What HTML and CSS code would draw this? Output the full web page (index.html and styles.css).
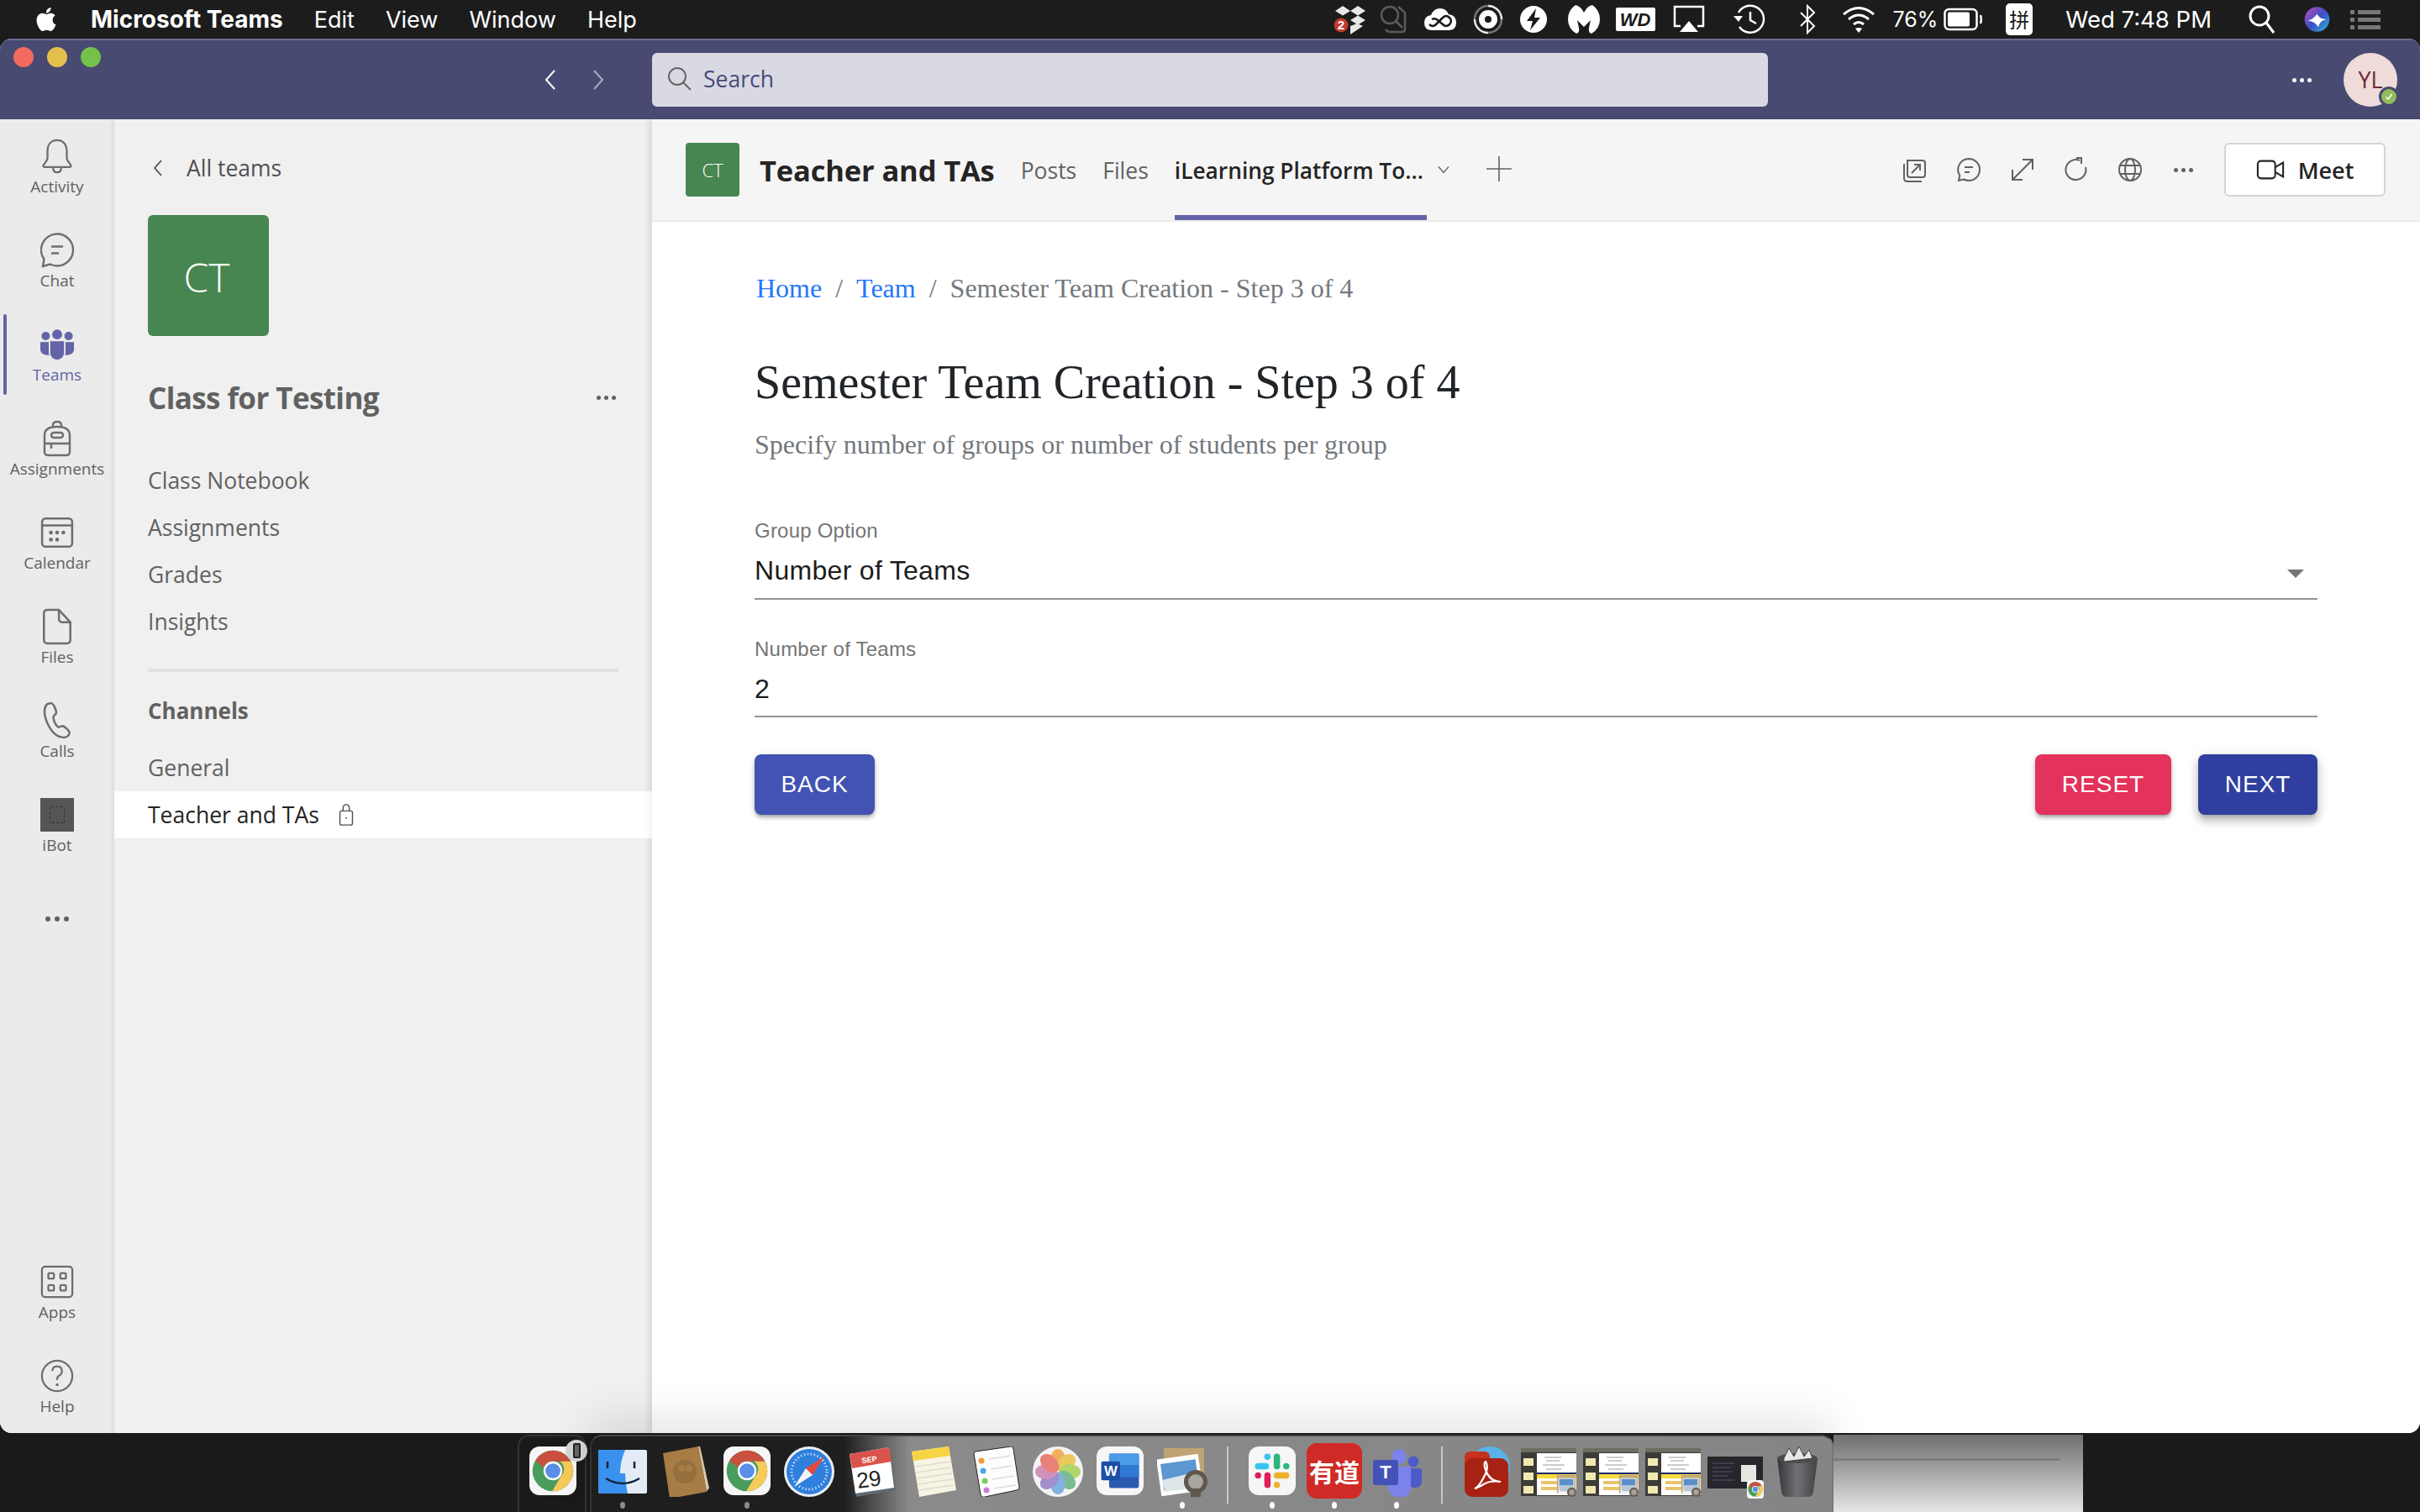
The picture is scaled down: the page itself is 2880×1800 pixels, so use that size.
FILE: index.html
```html
<!DOCTYPE html>
<html lang="en">
<head>
  <meta charset="UTF-8" />
  <title>Microsoft Teams</title>
  <link rel="stylesheet" href="styles.css">
</head>
<body>

  <svg class="defs" width="0" height="0">
    <symbol id="chrome" viewBox="0 0 60 60">
      <circle cx="30" cy="30" r="26" fill="#4a9c5d"/>
      <path d="M7.5 17A26 26 0 0 1 53 18H30a12 12 0 0 0-11.5 8z" fill="#c9503f"/>
      <path d="M53 18a26 26 0 0 1-24 38l12-20a12 12 0 0 0-2-18z" fill="#f6cb5a"/>
      <circle cx="30" cy="30" r="12" fill="#fff"/>
      <circle cx="30" cy="30" r="9.5" fill="#5a8ee8"/>
    </symbol>
    <symbol id="preview-mini" viewBox="0 0 60 60">
      <rect x="6" y="2" width="48" height="46" fill="#c4a978"/>
      <rect x="10" y="10" width="40" height="38" fill="#fff"/>
      <rect x="12" y="12" width="36" height="22" fill="#5c8fc9"/>
      <rect x="12" y="28" width="36" height="16" fill="#b8c8d8"/>
      <circle cx="44" cy="46" r="12" fill="#6a6257"/>
      <circle cx="44" cy="46" r="7" fill="#a6a39c"/>
    </symbol>
    <symbol id="doc-thumb" viewBox="0 0 66 57" preserveAspectRatio="none">
      <rect width="66" height="57" fill="#3b3b38"/>
      <rect x="0" y="0" width="66" height="5" fill="#6d6d62"/>
      <rect x="19" y="6" width="47" height="50" fill="#fff"/>
      <rect x="3" y="12" width="12" height="9" fill="#f0e9b0"/>
      <rect x="3" y="29" width="12" height="9" fill="#f0e9b0"/>
      <rect x="3" y="45" width="12" height="9" fill="#f0e9b0"/>
      <rect x="19" y="29" width="47" height="2" fill="#1d2a70"/>
      <rect x="19" y="31" width="47" height="5" fill="#f6dc3c"/>
      <rect x="24" y="39" width="38" height="4" fill="#eac46c"/>
      <rect x="24" y="46" width="30" height="4" fill="#eac46c"/>
      <path d="M28 11h20M30 15h16M26 20h26M30 25h18" stroke="#9a9a9a" stroke-width="1"/>
    </symbol>
  </svg>

  <div class="menubar">
    <div class="menu-left">
      <svg class="apple" viewBox="0 0 24 24"><path fill="#fff" d="M12.152 6.896c-.948 0-2.415-1.078-3.96-1.04-2.04.027-3.91 1.183-4.961 3.014-2.117 3.675-.546 9.103 1.519 12.09 1.013 1.454 2.208 3.09 3.792 3.039 1.52-.065 2.09-.987 3.935-.987 1.831 0 2.35.987 3.96.948 1.637-.026 2.676-1.48 3.676-2.948 1.156-1.688 1.636-3.325 1.662-3.415-.039-.013-3.182-1.221-3.22-4.857-.026-3.04 2.48-4.494 2.597-4.559-1.429-2.09-3.623-2.324-4.39-2.376-2-.156-3.675 1.09-4.61 1.09zM15.53 3.83c.843-1.012 1.4-2.427 1.245-3.83-1.207.052-2.662.805-3.532 1.818-.78.896-1.454 2.338-1.273 3.714 1.338.104 2.715-.688 3.559-1.701"/></svg>
      <b>Microsoft Teams</b>
      <span>Edit</span><span>View</span><span>Window</span><span>Help</span>
    </div>
    <div class="menu-right">
      <!-- dropbox -->
      <svg class="tray dropbox" viewBox="0 0 38 36"><path fill="#e8e8e8" d="M11 2l9 6-9 5.5L2 8zM29 2l9 6-9 5.5L20 8zM29 13.5l9 5.5-9 5.5-9-5.5zM20 26l8-3 7 3-15 10z"/><circle cx="9" cy="25" r="8.5" fill="#c0392b"/><text x="9" y="30" class="tray-num">2</text></svg>
      <svg class="tray" viewBox="0 0 38 36"><g fill="none" stroke="#5c5c5c" stroke-width="2.5"><circle cx="14" cy="13" r="10"/><path d="M21 20l8 8"/><path d="M24 3l8 7v20q0 3-3 3H14q-3 0-5-3"/></g></svg>
      <!-- creative cloud -->
      <svg class="tray cc" viewBox="0 0 38 36"><path fill="#fff" d="M0 22q0-8 8-9 3-8 11-8 7 0 10 7 9 1 9 10 0 9-9 9H9q-9 0-9-9z"/><path fill="none" stroke="#1b1b1b" stroke-width="2.5" d="M6 24q4 4 8 0l8-8q4-4 8 0t0 8q-4 4-8 0l-6-5q-3-3-7-1"/></svg>
      <svg class="tray" viewBox="0 0 38 36"><g fill="none" stroke-width="2.5"><path d="M19 2a16 16 0 0 1 16 16" stroke="#e8e8e8"/><path d="M35 18a16 16 0 0 1-16 16" stroke="#777"/><path d="M19 34A16 16 0 0 1 3 18" stroke="#e8e8e8"/><path d="M3 18A16 16 0 0 1 19 2" stroke="#777"/></g><circle cx="19" cy="18" r="11" fill="#fff"/><circle cx="19" cy="18" r="4" fill="#1b1b1b"/></svg>
      <svg class="tray" viewBox="0 0 38 36"><circle cx="19" cy="18" r="16" fill="#fff"/><path fill="#1b1b1b" d="M22 5L11 20h7l-3 11 12-15h-7z"/></svg>
      <svg class="tray" viewBox="0 0 38 36"><path fill="#fff" d="M9 1q6 1 10 9 4-8 10-9 9 6 9 17 0 11-10 17-4-1-3-7l2-9-8 8-8-8 2 9q1 6-3 7Q0 29 0 18 0 7 9 1z"/></svg>
      <svg class="tray wd" viewBox="0 0 48 36"><rect y="4" width="47" height="28" rx="2" fill="#fff"/><text x="23" y="26" class="tray-wd">WD</text></svg>
      <svg class="tray" viewBox="0 0 38 36"><path fill="none" stroke="#fff" stroke-width="2.5" d="M9 26H2V3h34v23h-7"/><path fill="#fff" d="M19 20l11 13H8z"/></svg>
      <svg class="tray" viewBox="0 0 38 36"><g fill="none" stroke="#fff" stroke-width="2.5"><path d="M6 10A16 16 0 1 1 7 27"/><path d="M20 9v10l7 4"/></g><path fill="#fff" d="M0 14h11l-5 7z"/></svg>
      <svg class="tray" viewBox="0 0 38 36"><path fill="none" stroke="#fff" stroke-width="2" d="M11 10l16 16-8 8V2l8 8-16 16"/></svg>
      <svg class="tray" viewBox="0 0 38 36"><g fill="none" stroke="#fff" stroke-width="3"><path d="M1 12q18-15 36 0"/><path d="M7 18q12-10 24 0"/><path d="M13 24q6-5 12 0"/></g><path fill="#fff" d="M19 34l-4-5q4-2 8 0z"/></svg>
      <span class="battery-num">76%</span>
      <svg class="battery" viewBox="0 0 46 28"><rect x="1.5" y="2" width="38" height="24" rx="5" fill="none" stroke="#fff" stroke-width="2.5"/><rect x="5" y="5.5" width="26" height="17" rx="2" fill="#fff"/><path d="M44 9q1.5 5 0 10" fill="none" stroke="#fff" stroke-width="2.5"/></svg>
      <span class="pinyin">拼</span>
      <span class="clock">Wed 7:48 PM</span>
      <svg class="tray find" viewBox="0 0 38 36"><g fill="none" stroke="#fff" stroke-width="3"><circle cx="16" cy="14" r="11"/><path d="M24 22l9 12"/></g></svg>
      <svg class="tray siri" viewBox="0 0 40 40"><defs><linearGradient id="siri" x1="0" y1="0" x2="1" y2="1"><stop offset="0" stop-color="#c54fb8"/><stop offset=".5" stop-color="#3c4fc8"/><stop offset="1" stop-color="#2fb6d8"/></linearGradient></defs><circle cx="20" cy="20" r="19" fill="url(#siri)"/><path d="M6 22q8-2 14-10 4 8 14 8-10 2-12 12-4-8-16-10z" fill="#fff"/></svg>
      <svg class="tray last" viewBox="0 0 38 36"><g fill="#777"><rect y="7" width="5" height="5"/><rect x="9" y="7" width="27" height="5"/><rect y="16" width="5" height="5"/><rect x="9" y="16" width="27" height="5"/><rect y="25" width="5" height="5"/><rect x="9" y="25" width="27" height="5"/></g></svg>
    </div>
  </div>

  <div class="window">
    <div class="titlebar">
      <div class="title-left">
        <div class="lights"><i class="red"></i><i class="yellow"></i><i class="green"></i></div>
        <div class="history">
          <svg viewBox="0 0 16 28"><path d="M13 3L3 14l10 11"/></svg>
          <svg class="off" viewBox="0 0 16 28"><path d="M3 3l10 11L3 25"/></svg>
        </div>
      </div>
      <div class="search">
        <svg viewBox="0 0 30 30"><circle cx="12" cy="12" r="10"/><path d="M19 19l9 9"/></svg>
        <span>Search</span>
      </div>
      <div class="title-right">
        <div class="dots light"><i></i><i></i><i></i></div>
        <div class="avatar">YL<span class="status"><svg viewBox="0 0 12 12"><path d="M2.5 6.5l2.5 2.5 4.5-6"/></svg></span></div>
      </div>
    </div>

    <div class="app">
      <nav class="rail">
        <div class="rail-item">
          <span class="rail-icon"><svg viewBox="0 0 40 46"><path d="M20 3c-8 0-12 6-12 14v8c0 3-3 6-5 9-.7 1.3 0 2.5 1.5 2.5h31c1.5 0 2.2-1.2 1.5-2.5-2-3-5-6-5-9v-8c0-8-4-14-12-14z"/><path d="M15 37c0 4 2 6 5 6s5-2 5-6"/></svg></span>
          <span class="rail-label">Activity</span>
        </div>
        <div class="rail-item">
          <span class="rail-icon"><svg viewBox="2 2 40 41"><path d="M22 3a19 19 0 0 1 0 38c-3 0-6-.7-8.5-2L5 41.5 6.5 33A19 19 0 0 1 22 3z"/><path d="M15 18h14M15 26h9"/></svg></span>
          <span class="rail-label">Chat</span>
        </div>
        <div class="rail-item active">
          <span class="rail-icon"><svg class="fill" viewBox="0 0 44 40"><circle cx="22" cy="7" r="6.5"/><circle cx="7" cy="9" r="5.5"/><circle cx="37" cy="9" r="5.5"/><path d="M13 16h18v15a9 9 0 0 1-18 0z"/><path d="M0 17h11v13c0 2 .3 3 1 4-7 0-12-2-12-8zM33 17h11v9c0 6-5 8-12 8 .7-1 1-2 1-4z"/></svg></span>
          <span class="rail-label">Teams</span>
        </div>
        <div class="rail-item">
          <span class="rail-icon"><svg viewBox="0 0 34 44"><path d="M12 8V6q0-4 5-4t5 4v2"/><path d="M2 18q0-10 15-10t15 10v20q0 4-4 4H6q-4 0-4-4z"/><rect x="10" y="15" width="14" height="6" rx="3"/><path d="M2 28h30M10 28v6"/></svg></span>
          <span class="rail-label">Assignments</span>
        </div>
        <div class="rail-item">
          <span class="rail-icon"><svg viewBox="0 0 38 36"><rect x="2" y="2" width="34" height="32" rx="4"/><path d="M2 10h34"/><g class="dotfill"><circle cx="12" cy="18" r="2.2"/><circle cx="19" cy="18" r="2.2"/><circle cx="26" cy="18" r="2.2"/><circle cx="12" cy="26" r="2.2"/><circle cx="19" cy="26" r="2.2"/></g></svg></span>
          <span class="rail-label">Calendar</span>
        </div>
        <div class="rail-item">
          <span class="rail-icon"><svg viewBox="0 0 34 42"><path d="M2 6q0-4 4-4h13l13 14v20q0 4-4 4H6q-4 0-4-4z"/><path d="M19 2v10q0 4 4 4h9"/></svg></span>
          <span class="rail-label">Files</span>
        </div>
        <div class="rail-item">
          <span class="rail-icon"><svg viewBox="0 0 34 42"><path d="M6 2C1 6 2 16 7 26s11 14 18 14c3 0 6-3 6-5 0-3-6-8-8-8-2 0-3 2-5 1-3-2-6-9-5-12 1-2 3-2 3-4 0-3-3-11-6-11-1 0-2 .5-4 1z"/></svg></span>
          <span class="rail-label">Calls</span>
        </div>
        <div class="rail-item">
          <span class="rail-icon"><span class="bot-tile"><span class="bot-inner"></span></span></span>
          <span class="rail-label">iBot</span>
        </div>
        <div class="rail-more"><div class="dots rail-dots"><i></i><i></i><i></i></div></div>
        <div class="rail-item push">
          <span class="rail-icon"><svg viewBox="0 0 42 42"><rect x="2" y="2" width="38" height="38" rx="4"/><rect x="10" y="10" width="7" height="7" rx="1.5"/><rect x="25" y="10" width="7" height="7" rx="1.5"/><rect x="10" y="25" width="7" height="7" rx="1.5"/><rect x="25" y="25" width="7" height="7" rx="1.5"/></svg></span>
          <span class="rail-label">Apps</span>
        </div>
        <div class="rail-item">
          <span class="rail-icon"><svg viewBox="0 0 42 42"><circle cx="21" cy="21" r="19"/><path d="M15 15q0-6 6-6t6 6q0 4-4 6-2 1-2 5"/><circle class="dotfill" cx="21" cy="32" r="1.8"/></svg></span>
          <span class="rail-label">Help</span>
        </div>
      </nav>

      <aside class="panel">
        <div class="back-row">
          <svg viewBox="0 0 14 22"><path d="M11 2L3 11l8 9"/></svg>
          <span>All teams</span>
        </div>
        <div class="team-tile">CT</div>
        <div class="team-name">
          <span>Class for Testing</span>
          <div class="dots"><i></i><i></i><i></i></div>
        </div>
        <ul class="links">
          <li>Class Notebook</li>
          <li>Assignments</li>
          <li>Grades</li>
          <li>Insights</li>
        </ul>
        <div class="divider"></div>
        <div class="channels-head">Channels</div>
        <ul class="links channels">
          <li>General</li>
          <li class="current">
            Teacher and TAs
            <svg viewBox="0 0 20 30"><rect x="2" y="10" width="16" height="18" rx="2"/><path d="M6 10V7q0-5 4-5t4 5v3"/><circle class="dotfill" cx="10" cy="19" r="1"/></svg>
          </li>
        </ul>
      </aside>

      <section class="content">
        <header class="tabs">
          <div class="tile-small">CT</div>
          <div class="channel-title">Teacher and TAs</div>
          <div class="tab">Posts</div>
          <div class="tab">Files</div>
          <div class="tab active">iLearning Platform To...</div>
          <svg class="tab-chevron" viewBox="0 0 14 10"><path d="M1 1.5l6 7 6-7"/></svg>
          <svg class="tab-plus" viewBox="0 0 30 30"><path d="M15 0v30M0 15h30"/></svg>
          <div class="actions">
            <svg viewBox="0 0 30 30"><path d="M6 4h18q3 0 3 3v14q0 3-3 3H9q-3 0-3-3z"/><path d="M2 8v17q0 4 4 4h17"/><path d="M11 19l10-10M14 9h7v7"/></svg>
            <svg viewBox="0 0 30 30"><path d="M15 2a13 13 0 0 1 0 26c-2 0-4-.5-6-1.5L3 28l1.3-6A13 13 0 0 1 15 2z"/><path d="M10 12h10M10 18h6"/></svg>
            <svg viewBox="0 0 30 30"><path d="M4 26L26 4M15 3h12v12M3 15v12h12"/></svg>
            <svg viewBox="0 0 30 30"><path d="M19 4a12 12 0 1 0 7 8"/><path d="M15 1h6v7"/></svg>
            <svg viewBox="0 0 30 30"><circle cx="15" cy="15" r="13"/><ellipse cx="15" cy="15" rx="6" ry="13"/><path d="M3 10h24M3 20h24"/></svg>
            <div class="dots"><i></i><i></i><i></i></div>
          </div>
          <button class="meet">
            <svg viewBox="0 0 36 26"><rect x="2" y="2" width="22" height="22" rx="4"/><path d="M24 10l10-6v18l-10-6"/></svg>
            Meet
          </button>
        </header>

        <main class="page">
          <div class="crumbs">
            <a>Home</a><span class="sep">/</span><a>Team</a><span class="sep">/</span><span>Semester Team Creation - Step 3 of 4</span>
          </div>
          <h1>Semester Team Creation - Step 3 of 4</h1>
          <p class="lead">Specify number of groups or number of students per group</p>

          <div class="field first">
            <label>Group Option</label>
            <div class="control">Number of Teams<i class="caret"></i></div>
          </div>
          <div class="field">
            <label>Number of Teams</label>
            <div class="control">2</div>
          </div>

          <div class="buttons">
            <button class="btn back">BACK</button>
            <button class="btn reset">RESET</button>
            <button class="btn next">NEXT</button>
          </div>
        </main>
      </section>
    </div>
  </div>

  <div class="desktop">
    <div class="dock-recent">
      <div class="dock-item"><span class="icon-box"><span class="squircle"><svg viewBox="0 0 60 60"><use href="#chrome"/></svg></span></span><span class="phone-badge"><i></i></span></div>
    </div>
    <div class="dock">
      <div class="dock-item gray-dot">
        <svg class="icon-box" viewBox="0 0 60 60"><rect x="1" y="4" width="58" height="52" rx="2" fill="#e3ecf6"/><path d="M1 6q0-2 2-2h30q-6 14-6 28h6q0 12 3 24H3q-2 0-2-2z" fill="#3a92ee"/><path d="M12 18v8M44 18v8" stroke="#17233a" stroke-width="2.5"/><path d="M10 38q20 12 40 0" fill="none" stroke="#17233a" stroke-width="2.5"/></svg>
        <i class="run"></i>
      </div>
      <div class="dock-item">
        <svg class="icon-box" viewBox="0 0 60 60"><path d="M4 8L46 0l10 54-44 8z" fill="#a77d45"/><path d="M46 0l2-.4 11 50-3 4z" fill="#d8c9a8"/><circle cx="30" cy="30" r="14" fill="#94703f"/><circle cx="26" cy="26" r="4" fill="#a77d45"/><circle cx="35" cy="26" r="4" fill="#a77d45"/></svg>
      </div>
      <div class="dock-item gray-dot">
        <span class="icon-box"><span class="squircle"><svg viewBox="0 0 60 60"><use href="#chrome"/></svg></span></span>
        <i class="run"></i>
      </div>
      <div class="dock-item">
        <svg class="icon-box" viewBox="0 0 60 60"><circle cx="30" cy="30" r="30" fill="#e9eef4"/><circle cx="30" cy="30" r="27" fill="#2f7fdd"/><circle cx="30" cy="30" r="21" fill="none" stroke="#bcd8f4" stroke-width="3" stroke-dasharray="1.5 2.5"/><path d="M48 12L26 26l8 8z" fill="#e8483c"/><path d="M12 48l14-22 8 8z" fill="#f3f3f3"/></svg>
      </div>
      <div class="dock-item">
        <svg class="icon-box" viewBox="0 0 60 60"><path d="M4 10L52 2l7 50-47 8z" fill="#5f6a72"/><path d="M4 9L51 1l6 48-46 7z" fill="#fff"/><path d="M4 9L51 1l3 17L7 26z" fill="#d9534c"/><text x="19" y="20" class="cal-month" transform="rotate(-8 19 20)">SEP</text><text x="14" y="50" class="cal-day" transform="rotate(-8 14 50)">29</text></svg>
      </div>
      <div class="dock-item">
        <svg class="icon-box" viewBox="0 0 60 60"><path d="M4 6L48 0l9 52-44 8z" fill="#f7f4e4"/><path d="M4 6L48 0l2 11-44 6z" fill="#f7d443"/><path d="M8 24l42-6M9 31l42-6M10 38l42-6M11 45l42-6M12 52l42-6" stroke="#dcdcd0" stroke-width="1.5"/></svg>
      </div>
      <div class="dock-item">
        <svg class="icon-box" viewBox="0 0 60 60"><path d="M6 6L48 0q3 0 3 3l7 46q0 3-3 3L17 60q-4 1-5-3L4 9q0-3 2-3z" fill="#fdfdfd" stroke="#222" stroke-width="1"/><circle cx="13" cy="17" r="3.5" fill="#f39c3d"/><circle cx="15" cy="29" r="3.5" fill="#4aa5ec"/><circle cx="17" cy="41" r="3.5" fill="#7ccf5b"/><circle cx="19" cy="52" r="3.5" fill="#c77ddb"/><path d="M22 15l26-4M24 27l26-4M26 39l26-4M28 50l26-4" stroke="#ddd" stroke-width="1.5"/></svg>
      </div>
      <div class="dock-item">
        <svg class="icon-box" viewBox="0 0 60 60"><circle cx="30" cy="30" r="30" fill="#f3f3f3"/><g opacity=".82"><ellipse cx="30" cy="16" rx="9" ry="13" fill="#f1a33c"/><ellipse cx="30" cy="16" rx="9" ry="13" fill="#e8c23f" transform="rotate(45 30 30)"/><ellipse cx="30" cy="16" rx="9" ry="13" fill="#a6cf50" transform="rotate(90 30 30)"/><ellipse cx="30" cy="16" rx="9" ry="13" fill="#62b07c" transform="rotate(135 30 30)"/><ellipse cx="30" cy="16" rx="9" ry="13" fill="#6ba3dd" transform="rotate(180 30 30)"/><ellipse cx="30" cy="16" rx="9" ry="13" fill="#8e7ac4" transform="rotate(225 30 30)"/><ellipse cx="30" cy="16" rx="9" ry="13" fill="#c97dae" transform="rotate(270 30 30)"/><ellipse cx="30" cy="16" rx="9" ry="13" fill="#e8695c" transform="rotate(315 30 30)"/></g></svg>
      </div>
      <div class="dock-item">
        <span class="icon-box"><span class="squircle"><svg viewBox="0 0 60 60"><rect x="16" y="8" width="38" height="44" rx="3" fill="#2b5bb0"/><rect x="16" y="8" width="38" height="15" fill="#4a9be8"/><rect x="16" y="23" width="38" height="15" fill="#2f79d4"/><rect x="6" y="18" width="24" height="24" rx="2" fill="#1b4fa8"/><text x="18" y="36" class="word-w">W</text></svg></span></span>
      </div>
      <div class="dock-item white-dot">
        <svg class="icon-box" viewBox="0 0 60 60"><rect x="8" y="2" width="48" height="38" fill="#bfa372"/><rect x="2" y="12" width="50" height="44" fill="#fff" transform="rotate(-8 27 34)"/><rect x="6" y="18" width="42" height="32" fill="#5c97d2" transform="rotate(-8 27 34)"/><path d="M6 40l42-10 4 18-42 6z" fill="#dfe6ea"/><circle cx="46" cy="42" r="14" fill="#5f574c"/><circle cx="46" cy="42" r="9" fill="#a9a69f"/><rect x="40" y="50" width="12" height="10" fill="#5f574c"/></svg>
        <i class="run"></i>
      </div>
      <i class="dock-sep"></i>
      <div class="dock-item white-dot">
        <span class="icon-box"><span class="squircle"><svg viewBox="0 0 60 60"><g stroke-width="8" stroke-linecap="round" fill="none"><path d="M22 24H12" stroke="#36c5f0"/><path d="M24 12v0" stroke="#36c5f0"/><path d="M36 24V12" stroke="#2eb67d"/><path d="M48 24h0" stroke="#2eb67d"/><path d="M36 36h12" stroke="#ecb22e"/><path d="M36 48v0" stroke="#ecb22e"/><path d="M24 36v12" stroke="#e01e5a"/><path d="M12 36h0" stroke="#e01e5a"/></g></svg></span></span>
        <i class="run"></i>
      </div>
      <div class="dock-item white-dot">
        <span class="icon-box youdao">有道</span>
        <i class="run"></i>
      </div>
      <div class="dock-item white-dot">
        <svg class="icon-box" viewBox="0 0 60 60"><circle cx="50" cy="18" r="6.5" fill="#4d5bc8"/><path d="M44 26h14q2 0 2 2v14q0 7-8 7-6 0-8-4z" fill="#4d5bc8"/><circle cx="33" cy="12" r="9" fill="#7b83eb"/><path d="M20 24h27v24a13 13 0 0 1-27 0z" fill="#7b83eb"/><rect x="2" y="16" width="30" height="30" rx="3" fill="#4452b8"/><text x="17" y="38" class="teams-t">T</text></svg>
        <i class="run"></i>
      </div>
      <i class="dock-sep"></i>
      <div class="dock-item">
        <svg class="icon-box" viewBox="0 0 60 60"><circle cx="34" cy="24" r="24" fill="#5ab3e6"/><rect x="4" y="6" width="30" height="30" rx="6" fill="#c7321f"/><rect x="4" y="14" width="52" height="46" rx="9" fill="#a82214"/><path d="M16 50q6-2 14-20 2-8-1-12-3 2 0 10 5 14 18 14-14-2-22 4-7 4-9 4z" fill="none" stroke="#fff" stroke-width="2.2"/></svg>
      </div>
      <div class="dock-item"><span class="stack"><svg viewBox="0 0 66 57" preserveAspectRatio="none"><use href="#doc-thumb"/></svg><svg class="stack-mini" viewBox="0 0 60 60"><use href="#preview-mini"/></svg></span></div>
      <div class="dock-item"><span class="stack"><svg viewBox="0 0 66 57" preserveAspectRatio="none"><use href="#doc-thumb"/></svg><svg class="stack-mini" viewBox="0 0 60 60"><use href="#preview-mini"/></svg></span></div>
      <div class="dock-item"><span class="stack"><svg viewBox="0 0 66 57" preserveAspectRatio="none"><use href="#doc-thumb"/></svg><svg class="stack-mini" viewBox="0 0 60 60"><use href="#preview-mini"/></svg></span></div>
      <div class="dock-item"><span class="stack dark"><svg viewBox="0 0 66 38" preserveAspectRatio="none"><rect width="66" height="38" fill="#26262c"/><rect x="40" y="10" width="18" height="20" fill="#e8e6e0"/><path d="M6 8h26M6 13h22M6 18h24M6 23h18M6 28h26" stroke="#55556a" stroke-width="1.2"/></svg><span class="squircle stack-chrome"><svg viewBox="0 0 60 60"><use href="#chrome"/></svg></span></span></div>
      <div class="dock-item">
        <svg class="icon-box" viewBox="0 0 60 60"><defs><linearGradient id="bin" x1="0" x2="1"><stop offset="0" stop-color="#343638"/><stop offset=".5" stop-color="#6f7174"/><stop offset="1" stop-color="#3f4143"/></linearGradient></defs><path d="M6 14h48l-5 40q-1 6-6 6H17q-5 0-6-6z" fill="url(#bin)"/><ellipse cx="30" cy="14" rx="24" ry="6" fill="#4a4c4e"/><path d="M14 14l6-12 6 10 6-12 6 12 6-8 4 10-34 4z" fill="#e6e6e6" stroke="#444"/></svg>
      </div>
    </div>
    <div class="wallpaper"></div>
  </div>

</body>
</html>
```

FILE: styles.css
```css
* {
  box-sizing: border-box;
}

html, body {
  margin: 0;
  width: 2880px;
  height: 1800px;
  overflow: hidden;
}

body {
  background: #1a1a1a;
  font-family: "Open Sans", sans-serif;
  display: flex;
  flex-direction: column;
}

.defs {
  display: block;
  height: 0;
}

ul {
  list-style: none;
  margin: 0;
  padding: 0;
}

/* menu bar */
.menubar {
  height: 46px;
  flex: none;
  background: #1c1c1c;
  color: #fff;
  display: flex;
  justify-content: space-between;
  align-items: center;
  font-family: Inter, sans-serif;
  font-size: 27px;
  white-space: nowrap;
}

.menu-left {
  display: flex;
  align-items: center;
  gap: 37px;
  padding-left: 41px;
}

.apple {
  width: 28px;
  height: 32px;
  margin-right: 2px;
}

.menu-left b {
  font-weight: 700;
  font-size: 28px;
}

.menu-right {
  display: flex;
  align-items: center;
  padding-right: 45px;
}

/* gaps between the tray icons are uneven, so each one gets its own */
.tray {
  width: 38px;
  height: 36px;
  flex: none;
}

.tray:nth-of-type(1) { margin-right: 15px; }
.tray:nth-of-type(2) { margin-right: 17px; }
.tray:nth-of-type(3) { margin-right: 19px; }
.tray:nth-of-type(4) { margin-right: 16px; }
.tray:nth-of-type(5) { margin-right: 22px; }
.tray:nth-of-type(6) { margin-right: 19px; }
.tray:nth-of-type(7) { margin-right: 20px; }
.tray:nth-of-type(8) { margin-right: 34px; }
.tray:nth-of-type(9) { margin-right: 31px; }
.tray:nth-of-type(10) { margin-right: 23px; }
.tray:nth-of-type(11) { margin-right: 21px; }

.tray.wd {
  width: 48px;
}

.tray-num {
  font: 700 15px "Liberation Sans", sans-serif;
  fill: #fff;
  text-anchor: middle;
}

.tray-wd {
  font: italic 700 22px "Liberation Sans", sans-serif;
  fill: #1b1b1b;
  text-anchor: middle;
}

.battery-num {
  font-size: 25px;
  margin-right: 7px;
}

.battery {
  width: 46px;
  height: 28px;
  margin-right: 28px;
}

.pinyin {
  width: 32px;
  height: 38px;
  background: #fff;
  color: #1b1b1b;
  border-radius: 5px;
  font: 24px/38px "Noto Sans CJK SC", sans-serif;
  text-align: center;
  margin-right: 39px;
}

.clock {
  margin-right: 41px;
  font-size: 27.5px;
}

.tray.find {
  margin-right: 31px;
}

.tray.siri {
  width: 31px;
  height: 38px;
  margin-right: 24px;
}

.tray.last {
  margin-right: 0;
}

/* window */
.window {
  height: 1660px;
  flex: none;
  display: flex;
  flex-direction: column;
  border-radius: 14px;
  overflow: hidden;
  background: #fff;
}

.titlebar {
  height: 96px;
  flex: none;
  background: #484a71;
  border-top: 2px solid #6d6e91;
  display: grid;
  grid-template-columns: 776px 1328px 1fr;
  align-items: center;
}

.title-left {
  display: flex;
  align-items: flex-start;
  justify-content: space-between;
  align-self: stretch;
  padding-left: 16px;
  padding-right: 56px;
}

.lights {
  display: flex;
  gap: 16px;
  padding-top: 8px;
}

.lights i {
  width: 24px;
  height: 24px;
  border-radius: 50%;
}

.lights .red { background: #f26b5e; }
.lights .yellow { background: #e3c04c; }
.lights .green { background: #74c24a; }

.history {
  display: flex;
  gap: 41px;
  padding-top: 33px;
}

.history svg {
  width: 16px;
  height: 28px;
  fill: none;
  stroke: #fff;
  stroke-width: 2;
}

.history .off {
  stroke: #a9aac2;
}

.search {
  height: 64px;
  background: #d9d9e3;
  border-radius: 6px;
  display: flex;
  align-items: center;
  gap: 13px;
  padding: 0 0 2px 18px;
  color: #484a7a;
  font-size: 26.5px;
}

.search svg {
  width: 30px;
  height: 30px;
  fill: none;
  stroke: #666;
  stroke-width: 2;
}

.title-right {
  display: flex;
  align-items: center;
  justify-content: flex-end;
  gap: 38px;
  padding-right: 27px;
}

.dots {
  display: flex;
  gap: 4px;
}

.dots i {
  width: 5px;
  height: 5px;
  border-radius: 50%;
  background: #616161;
}

.dots.light i {
  background: #fff;
}

.avatar {
  width: 64px;
  height: 64px;
  border-radius: 50%;
  background: #f0dbdb;
  color: #6a2b33;
  text-align: center;
  font-size: 27px;
  line-height: 64px;
  position: relative;
}

.status {
  position: absolute;
  right: -2px;
  bottom: 0;
  width: 24px;
  height: 24px;
  border-radius: 50%;
  background: #92bd5c;
  border: 3px solid #484a71;
  display: flex;
  align-items: center;
  justify-content: center;
}

.status svg {
  width: 12px;
  height: 12px;
  fill: none;
  stroke: #fff;
  stroke-width: 1.5;
}

.app {
  flex: 1;
  display: flex;
  min-height: 0;
}

/* left rail */
.rail {
  width: 136px;
  flex: none;
  background: #ebebeb;
  display: flex;
  flex-direction: column;
  gap: 16px;
  padding: 8px 0;
  box-shadow: inset -8px 0 8px -8px rgba(0, 0, 0, .12);
}

.rail-item {
  height: 96px;
  flex: none;
  padding-top: 10px;
  display: flex;
  flex-direction: column;
  align-items: center;
  position: relative;
  color: #616161;
}

.rail-item.push {
  margin-top: auto;
}

.rail-item.active {
  color: #6264a7;
}

.rail-item.active::before {
  content: "";
  position: absolute;
  left: 4px;
  top: 0;
  bottom: 0;
  width: 4px;
  background: #6264a7;
  border-radius: 2px;
}

.rail-icon {
  height: 52px;
  display: flex;
  align-items: center;
  justify-content: center;
}

.rail-icon svg {
  width: 40px;
  height: 44px;
  fill: none;
  stroke: #6e6e6e;
  stroke-width: 2.4;
}

.rail-icon svg.fill {
  fill: #6264a7;
  stroke: none;
  height: 40px;
}

.dotfill {
  fill: #6e6e6e;
  stroke: none;
}

.rail-label {
  font-size: 19px;
  line-height: 20px;
}

.bot-tile {
  width: 40px;
  height: 40px;
  background: #555;
  display: flex;
  align-items: center;
  justify-content: center;
}

.bot-inner {
  width: 18px;
  height: 20px;
  border: 1.5px dashed #333;
  border-radius: 2px;
}

.rail-more {
  height: 96px;
  flex: none;
  display: flex;
  align-items: center;
  justify-content: center;
}

.rail-dots {
  gap: 5px;
}

.rail-dots i {
  width: 6px;
  height: 6px;
}

/* team panel */
.panel {
  width: 640px;
  flex: none;
  background: #f0f0f0;
  padding-top: 30px;
  font-size: 26.5px;
  color: #616161;
  box-shadow: inset -14px 0 12px -12px rgba(0, 0, 0, .06);
}

.back-row {
  height: 56px;
  display: flex;
  align-items: center;
  padding-left: 45px;
  gap: 27px;
  color: #505050;
}

.back-row svg {
  width: 14px;
  height: 22px;
  fill: none;
  stroke: #505050;
  stroke-width: 1.8;
}

.team-tile {
  width: 144px;
  height: 144px;
  margin: 28px 0 0 40px;
  padding: 2px 4px 0 0;
  background: #478650;
  border-radius: 6px;
  color: #fff;
  font-size: 48px;
  font-weight: 300;
  display: flex;
  align-items: center;
  justify-content: center;
}

.team-name {
  height: 56px;
  margin: 45px 40px 0;
  display: flex;
  align-items: center;
  justify-content: space-between;
  font-size: 35px;
  font-weight: 700;
  letter-spacing: -.6px;
}

.team-name .dots {
  padding-right: 3px;
}

.links {
  margin-top: 43px;
}

.links li {
  height: 56px;
  line-height: 56px;
  padding-left: 40px;
}

.divider {
  height: 4px;
  margin: 28px 40px 0;
  background: #e1e1e1;
}

.channels-head {
  margin: 18px 0 0 40px;
  line-height: 56px;
  font-size: 26px;
  font-weight: 700;
}

.links.channels {
  margin-top: 12px;
}

.links .current {
  background: #fff;
  color: #252423;
  display: flex;
  align-items: center;
  gap: 22px;
}

.current svg {
  width: 20px;
  height: 28px;
  fill: none;
  stroke: #505050;
  stroke-width: 1.5;
}

.current .dotfill {
  fill: #505050;
}

/* content area */
.content {
  flex: 1;
  display: flex;
  flex-direction: column;
  min-width: 0;
  box-shadow: -4px 0 8px rgba(0, 0, 0, .05);
}

.tabs {
  height: 122px;
  flex: none;
  background: #f5f5f5;
  border-bottom: 2px solid #ebebeb;
  display: flex;
  align-items: center;
  padding: 0 41px 0 40px;
  font-size: 26.5px;
  color: #616161;
}

.tile-small {
  width: 64px;
  height: 64px;
  background: #478650;
  border-radius: 4px;
  color: #fff;
  font-size: 22px;
  font-weight: 300;
  display: flex;
  align-items: center;
  justify-content: center;
}

.channel-title {
  margin-left: 24px;
  font-size: 34.5px;
  font-weight: 700;
  color: #252423;
  letter-spacing: -.15px;
}

.tab {
  margin-left: 31px;
  align-self: stretch;
  display: flex;
  align-items: center;
  border-bottom: 6px solid transparent;
  padding-top: 8px;
}

.tab.active {
  width: 300px;
  color: #252423;
  font-size: 26.3px;
  font-weight: 600;
  white-space: nowrap;
  border-bottom-color: #6264a7;
}

.tab-chevron {
  width: 14px;
  height: 10px;
  margin-left: 13px;
  fill: none;
  stroke: #616161;
  stroke-width: 1.3;
}

.tab-plus {
  width: 30px;
  height: 30px;
  margin-left: 44px;
  margin-bottom: 2px;
  fill: none;
  stroke: #616161;
  stroke-width: 1.6;
}

.actions {
  margin-left: auto;
  display: flex;
  align-items: center;
  gap: 34px;
}

.actions svg {
  width: 30px;
  height: 30px;
  fill: none;
  stroke: #616161;
  stroke-width: 2;
}

.actions .dots {
  margin: 0 -3px 0 3px;
}

.meet {
  margin-left: 40px;
  width: 192px;
  height: 64px;
  background: #fff;
  border: 2px solid #d4d4d4;
  border-radius: 6px;
  font: 600 27px "Open Sans", sans-serif;
  color: #252423;
  display: flex;
  align-items: center;
  justify-content: center;
  gap: 16px;
}

.meet svg {
  width: 34px;
  height: 26px;
  fill: none;
  stroke: #252423;
  stroke-width: 2.2;
}

.page {
  flex: 1;
  background: #fff;
  padding: 55px 122px 0;
  font-family: "Liberation Serif", serif;
}

.crumbs {
  font-size: 32px;
  line-height: 48px;
  color: #73787d;
  padding-left: 2px;
}

.crumbs a {
  color: #1f78f7;
}

.crumbs .sep {
  margin: 0 16px;
}

h1 {
  margin: 54px 0 0;
  font-size: 56px;
  line-height: 68px;
  font-weight: 400;
  color: #212529;
}

.lead {
  margin: 16px 0 0;
  font-size: 32px;
  line-height: 48px;
  color: #73787d;
}

.field {
  margin-top: 43px;
  font-family: "Liberation Sans", sans-serif;
}

.field.first {
  margin-top: 63px;
}

.field label {
  display: block;
  font-size: 24px;
  line-height: 32px;
  color: #757575;
  letter-spacing: .225px;
}

.control {
  height: 65px;
  border-bottom: 2px solid #949494;
  font-size: 32px;
  letter-spacing: .3px;
  color: #1d1d1d;
  display: flex;
  align-items: center;
  justify-content: space-between;
  padding: 0 16px 0 0;
}

.first .control {
  height: 66px;
  padding-bottom: 2px;
}

.caret {
  border-top: 10px solid #757575;
  border-left: 10px solid transparent;
  border-right: 10px solid transparent;
  margin-top: 8px;
}

.buttons {
  margin-top: 44px;
  display: flex;
  gap: 32px;
}

.btn {
  height: 72px;
  border: 0;
  border-radius: 8px;
  color: #fff;
  font: 500 28px "Liberation Sans", sans-serif;
  letter-spacing: 1px;
  box-shadow: 0 3px 4px -2px rgba(0, 0, 0, .3), 0 4px 5px rgba(0, 0, 0, .14), 0 1px 10px rgba(0, 0, 0, .12);
}

.back {
  width: 143px;
  margin-right: auto;
  background: #4353b3;
}

.reset {
  width: 162px;
  background: #e3325c;
}

.next {
  width: 142px;
  background: #303f9f;
  box-shadow: 0 5px 5px -3px rgba(0, 0, 0, .2), 0 8px 10px 1px rgba(0, 0, 0, .14), 0 3px 14px 2px rgba(0, 0, 0, .12);
}

/* dock */
.desktop {
  flex: 1;
  display: flex;
  align-items: stretch;
  padding: 2px 0 0 616px;
}

.dock-recent {
  width: 82px;
  border: 2px solid #333;
  border-bottom: 0;
  border-radius: 14px 14px 0 0;
  padding-left: 6px;
}

.dock {
  width: 1480px;
  margin-left: 4px;
  display: flex;
  border: 2px solid #333;
  border-bottom: 0;
  border-right-color: #777;
  border-top-color: #444;
  border-radius: 14px 14px 0 0;
  background: linear-gradient(90deg, #1e1e1e 0, #1e1e1e 300px, #8a8a8a 378px, #858585 100%);
  box-shadow: 0 -20px 50px rgba(0, 0, 0, .1);
  position: relative;
}

.dock-item {
  width: 74px;
  flex: none;
  padding-top: 12px;
  display: flex;
  flex-direction: column;
  align-items: center;
  position: relative;
}

.dock-recent .dock-item {
  width: 68px;
}

.icon-box {
  width: 60px;
  height: 60px;
  display: block;
}

.squircle {
  display: block;
  width: 56px;
  height: 58px;
  margin: 0 auto;
  background: #f6f6f6;
  border-radius: 12px;
  overflow: hidden;
}

.squircle svg {
  display: block;
  width: 56px;
  height: 58px;
}

.phone-badge {
  position: absolute;
  right: -7px;
  top: 4px;
  width: 26px;
  height: 26px;
  border-radius: 50%;
  background: #d6d6d6;
  display: flex;
  align-items: center;
  justify-content: center;
}

.phone-badge i {
  width: 9px;
  height: 18px;
  border: 2px solid #222;
  background: #666;
  border-radius: 2px;
}

.run {
  position: absolute;
  left: 34px;
  bottom: 4px;
  width: 6px;
  height: 8px;
  border-radius: 50%;
  background: #fff;
}

.gray-dot .run {
  background: #8d8d8d;
}

.dock-sep {
  width: 2px;
  height: 68px;
  margin: 12px 15px 0 16px;
  background: #c8c8c8;
  flex: none;
}

.youdao {
  background: #cf2a26;
  border-radius: 12px;
  width: 66px;
  height: 66px;
  margin-top: -4px;
  color: #fff;
  font: 700 30px/66px "Noto Sans CJK SC", sans-serif;
  text-align: center;
  white-space: nowrap;
  overflow: hidden;
}

.stack {
  display: block;
  width: 66px;
  height: 57px;
  margin-top: 2px;
  position: relative;
}

.stack svg {
  display: block;
}

.stack > svg:first-child {
  width: 66px;
  height: 57px;
}

.stack-mini {
  position: absolute;
  right: -2px;
  bottom: -4px;
  width: 28px;
  height: 32px;
}

.stack.dark {
  height: 38px;
  margin-top: 12px;
}

.stack.dark > svg:first-child {
  height: 38px;
}

.stack-chrome {
  position: absolute;
  right: -1px;
  top: 28px;
  width: 20px;
  height: 22px;
  border-radius: 4px;
}

.stack-chrome svg {
  width: 20px;
  height: 22px;
}

.cal-month {
  font: 700 9px "Liberation Sans", sans-serif;
  fill: #fff;
}

.cal-day {
  font: 400 26px "Liberation Sans", sans-serif;
  fill: #222;
}

.word-w {
  font: 700 18px "Liberation Sans", sans-serif;
  fill: #fff;
  text-anchor: middle;
}

.teams-t {
  font: 700 22px "Liberation Sans", sans-serif;
  fill: #fff;
  text-anchor: middle;
}

.wallpaper {
  width: 297px;
  background: linear-gradient(180deg, #6f6f6f 0, #a2a2a2 45%, #e6e6e6 100%);
  position: relative;
}

.wallpaper::before {
  content: "";
  position: absolute;
  left: 0;
  right: 27px;
  top: 28px;
  height: 3px;
  background: #7c7c7c;
}
```
